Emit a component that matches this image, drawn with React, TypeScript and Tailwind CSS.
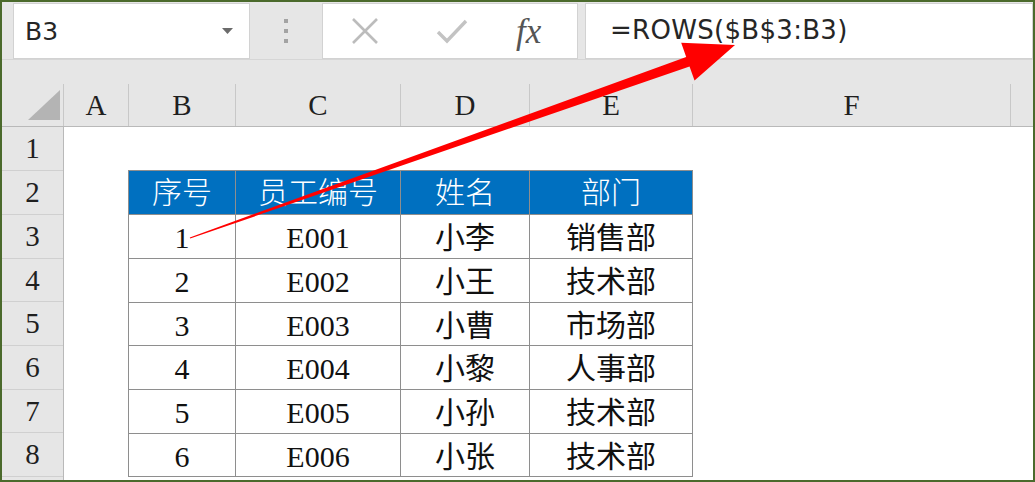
import React from "react";

const serif = "font-[Liberation_Serif,Noto_Sans_CJK_SC,serif]";

// column header cells, widths include the right border line
const columns = [
  { label: "A", w: "w-[65px]" },
  { label: "B", w: "w-[107px]" },
  { label: "C", w: "w-[165px]" },
  { label: "D", w: "w-[129px]" },
  { label: "E", w: "w-[163px]" },
  { label: "F", w: "w-[318px]" },
];

const rowHeights = ["h-[44px]", "h-[44px]", "h-[44px]", "h-[43px]", "h-[44px]", "h-[44px]", "h-[43px]", "h-[44px]"];

const tableHead = ["序号", "员工编号", "姓名", "部门"];
const tableRows = [
  ["1", "E001", "小李", "销售部"],
  ["2", "E002", "小王", "技术部"],
  ["3", "E003", "小曹", "市场部"],
  ["4", "E004", "小黎", "人事部"],
  ["5", "E005", "小孙", "技术部"],
  ["6", "E006", "小张", "技术部"],
];

const Arrow = () => {
  // tapered red arrow from cell B3 up to the formula bar
  const sx = 190, sy = 238;
  const tx = 735, ty = 45;
  const len = Math.hypot(tx - sx, ty - sy);
  const dx = (tx - sx) / len, dy = (ty - sy) / len;
  const nx = -dy, ny = dx;
  const headLen = 50, headW = 20, shaftW = 5;
  const bx = tx - dx * headLen, by = ty - dy * headLen;
  const pts = [
    [sx + nx * 0.6, sy + ny * 0.6],
    [bx + nx * shaftW, by + ny * shaftW],
    [bx + nx * headW, by + ny * headW],
    [tx, ty],
    [bx - nx * headW, by - ny * headW],
    [bx - nx * shaftW, by - ny * shaftW],
    [sx - nx * 0.6, sy - ny * 0.6],
  ]
    .map((p) => p.join(","))
    .join(" ");
  return (
    <svg className="absolute left-[-2px] top-[-2px] pointer-events-none" width="1035" height="482" viewBox="0 0 1035 482">
      <polygon points={pts} fill="#ff0000" />
    </svg>
  );
};

export default function App() {
  return (
    <div className="relative w-[1035px] h-[482px] border-2 border-[#4b6a2c] bg-[#e6e6e6] overflow-hidden flex flex-col">
      {/* ===== formula bar ===== */}
      <div className="h-[57px] flex items-start pt-[1px] shrink-0">
        <div className="ml-[11px] w-[237px] h-[56px] bg-white border border-[#d2d2d2] flex items-center justify-between pl-[11px] pr-[16px]">
          <span className="font-[DejaVu_Sans,sans-serif] text-[25px] text-[#262626] leading-none">B3</span>
          <svg width="11" height="7" viewBox="0 0 11 7">
            <polygon points="0,0 11,0 5.5,6" fill="#6b6b6b" />
          </svg>
        </div>
        <div className="w-[72px] h-[56px] flex flex-col items-center justify-center gap-[6px]">
          <span className="w-[4px] h-[4px] bg-[#a3a3a3]" />
          <span className="w-[4px] h-[4px] bg-[#a3a3a3]" />
          <span className="w-[4px] h-[4px] bg-[#a3a3a3]" />
        </div>
        <div className="w-[256px] h-[56px] bg-white border border-[#d2d2d2] flex items-center">
          <svg className="ml-[28px]" width="28" height="28" viewBox="0 0 28 28">
            <path d="M2 2 L26 26 M26 2 L2 26" stroke="#bcbcbc" strokeWidth="2.6" fill="none" />
          </svg>
          <svg className="ml-[57px]" width="32" height="26" viewBox="0 0 32 26">
            <path d="M2 14 L11 23 L30 3" stroke="#c3c3c3" strokeWidth="3.4" fill="none" />
          </svg>
          <span className="ml-[48px] font-[Liberation_Serif,serif] italic text-[35px] text-[#555] leading-none">fx</span>
        </div>
        <div className="ml-[7px] flex-1 h-[56px] bg-white border border-[#d2d2d2] flex items-center pl-[24px] pb-[2px]">
          <span className="font-[DejaVu_Sans,sans-serif] text-[26px] text-[#262626] leading-none tracking-[0.3px]">=ROWS($B$3:B3)</span>
        </div>
      </div>

      <div className="h-[25px] shrink-0 border-t border-[#d6d6d6]" />

      {/* ===== column headers ===== */}
      <div className={`h-[43px] shrink-0 flex border-b border-[#b9b9b9] ${serif} text-[29px] text-[#1f1f1f]`}>
        <div className="w-[62px] border-r border-[#c8c8c8] flex items-end justify-end pr-[3px] pb-[6px]">
          <svg width="32" height="30" viewBox="0 0 32 30">
            <polygon points="0,30 32,30 32,0" fill="#b4b4b4" />
          </svg>
        </div>
        {columns.map((c) => (
          <div key={c.label} className={`${c.w} border-r border-[#c8c8c8] flex items-center justify-center leading-none`}>
            {c.label}
          </div>
        ))}
        <div className="flex-1" />
      </div>

      {/* ===== sheet body ===== */}
      <div className="flex-1 flex min-h-0">
        <div className={`w-[62px] shrink-0 border-r border-[#b9b9b9] flex flex-col ${serif} text-[29px] text-[#1f1f1f]`}>
          {rowHeights.map((h, i) => (
            <div key={i} className={`${h} shrink-0 border-b border-[#d0d0d0] flex items-center justify-center leading-none`}>
              {i + 1}
            </div>
          ))}
          <div className="flex-1" />
        </div>

        <div className="flex-1 bg-white">
          <div
            className={`mt-[43px] ml-[64px] w-[565px] grid grid-cols-[106px_164px_128px_162px] grid-rows-[43px_43px_43px_42px_43px_43px_42px] gap-px bg-[#8e8e8e] border border-[#8e8e8e] ${serif} text-[30px] text-[#111]`}
          >
            {tableHead.map((t) => (
              <div key={t} className="bg-[#0070c0] text-white flex items-center justify-center leading-none font-light">
                {t}
              </div>
            ))}
            {tableRows.map((r) =>
              r.map((cell, j) => (
                <div key={r[0] + "-" + j} className="bg-white flex items-center justify-center leading-none pt-[3px]">
                  {cell}
                </div>
              ))
            )}
          </div>
        </div>
      </div>

      <Arrow />
    </div>
  );
}
